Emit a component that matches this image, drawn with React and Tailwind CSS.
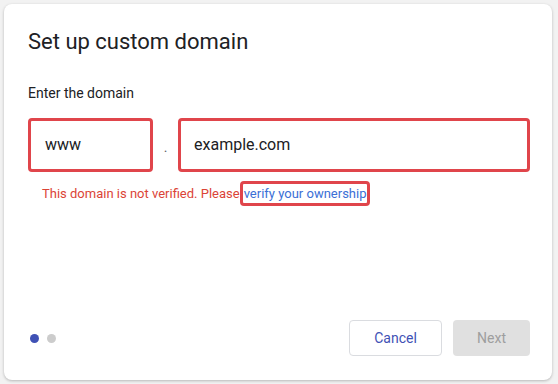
import React from 'react';

function App() {
  return (
    <div className="w-[558px] h-[384px] bg-[#f2f2f2] p-1 font-['Roboto',sans-serif]">
      <div className="h-[376px] w-[548px] bg-white rounded-lg shadow-[0_1px_3px_rgba(0,0,0,0.25)] flex flex-col pl-6 pr-[22px] pt-[24px] pb-6">
        <h1 className="text-[22px] leading-[28px] text-[#202124]">Set up custom domain</h1>
        <p className="mt-[27px] text-[14px] leading-[20px] text-[#202124]">Enter the domain</p>

        <div className="mt-[15px] flex items-center">
          <div className="w-[125px] h-[54px] border-[3px] border-[#e0454b] rounded-[4px] flex items-center pl-[14px] text-[16px] text-[#202124]">
            www
          </div>
          <div className="w-[25px] text-center text-[14px] text-[#5f6368] pt-1">.</div>
          <div className="flex-1 h-[54px] border-[3px] border-[#e0454b] rounded-[4px] flex items-center pl-[13px] text-[16px] text-[#202124]">
            example.com
          </div>
        </div>

        <div className="mt-[9px] flex items-center pl-[14px] text-[13px] leading-[19px]">
          <span className="text-[#db4437]">This domain is not verified. Please</span>
          <span className="border-[3px] border-[#e0454b] rounded-[4px] px-[1px] h-[25px] flex items-center text-[#3b6fd6]">
            verify your ownership
          </span>
        </div>

        <div className="mt-auto flex items-center">
          <div className="flex items-center gap-2 pl-[2px]">
            <span className="w-[9px] h-[9px] rounded-full bg-[#3f51b5]" />
            <span className="w-[9px] h-[9px] rounded-full bg-[#cccccc]" />
          </div>
          <div className="ml-auto flex gap-[11px]">
            <button className="w-[93px] h-[36px] border border-[#dadce0] rounded-[4px] text-[14px] text-[#3f51b5] bg-white">
              Cancel
            </button>
            <button className="w-[77px] h-[36px] rounded-[4px] text-[14px] text-[#9e9e9e] bg-[#e0e0e0]">
              Next
            </button>
          </div>
        </div>
      </div>
    </div>
  );
}

export default App;
